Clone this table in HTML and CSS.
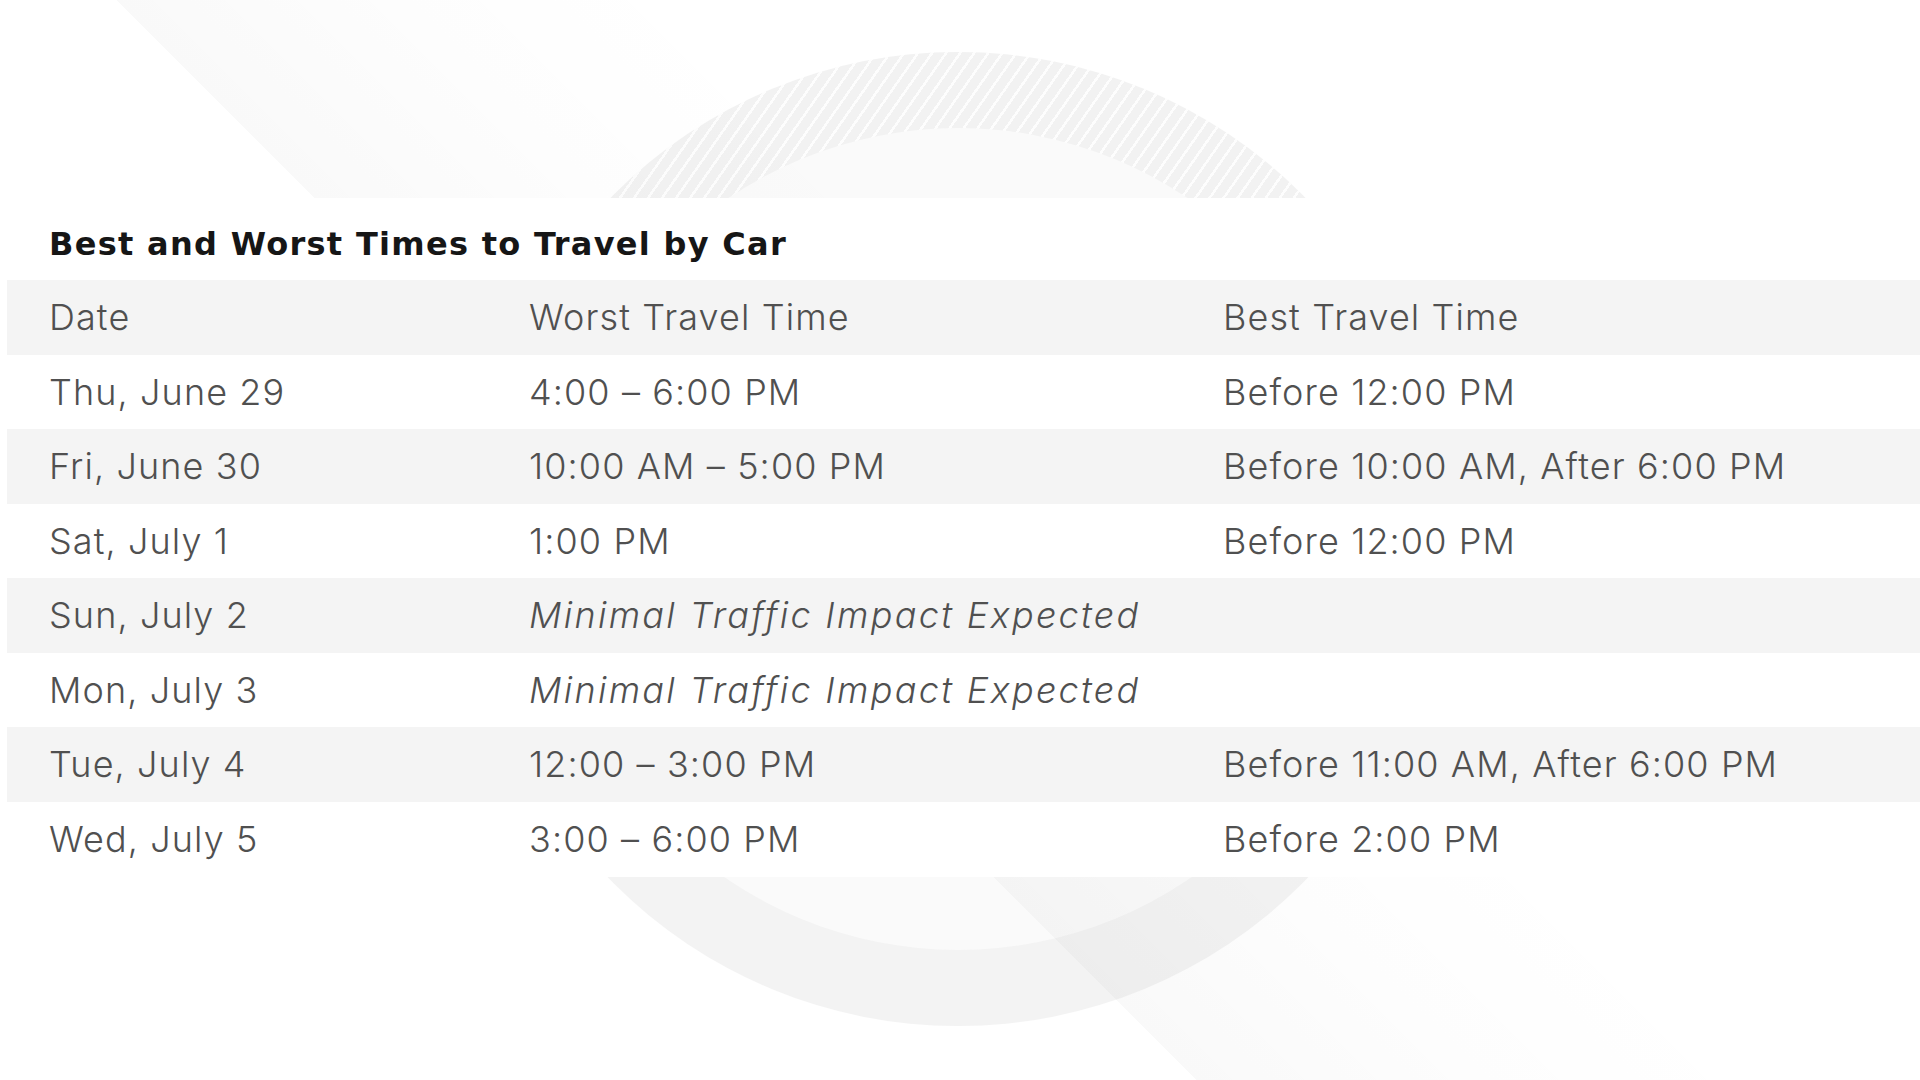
FILE: index.html
```html
<!DOCTYPE html>
<html lang="en">
<head>
<meta charset="utf-8">
<title>Best and Worst Times to Travel by Car</title>
<link rel="stylesheet" href="styles.css">
</head>
<body>
<div class="page">
  <div class="backdrop">
    <div class="ring"></div>
    <div class="disc"></div>
    <div class="band"></div>
  </div>
  <section class="panel">
    <h2 class="title">Best and Worst Times to Travel by Car</h2>
    <div class="table">
      <div class="row shade"><span>Date</span><span>Worst Travel Time</span><span>Best Travel Time</span></div>
      <div class="row"><span>Thu, June 29</span><span>4:00 – 6:00 PM</span><span>Before 12:00 PM</span></div>
      <div class="row shade"><span>Fri, June 30</span><span>10:00 AM – 5:00 PM</span><span>Before 10:00 AM, After 6:00 PM</span></div>
      <div class="row"><span>Sat, July 1</span><span>1:00 PM</span><span>Before 12:00 PM</span></div>
      <div class="row shade"><span>Sun, July 2</span><span class="note">Minimal Traffic Impact Expected</span><span></span></div>
      <div class="row"><span>Mon, July 3</span><span class="note">Minimal Traffic Impact Expected</span><span></span></div>
      <div class="row shade"><span>Tue, July 4</span><span>12:00 – 3:00 PM</span><span>Before 11:00 AM, After 6:00 PM</span></div>
      <div class="row"><span>Wed, July 5</span><span>3:00 – 6:00 PM</span><span>Before 2:00 PM</span></div>
    </div>
  </section>
</div>
</body>
</html>
```
FILE: styles.css
```css
html, body {
  margin: 0;
  padding: 0;
  background: #ffffff;
}

.page {
  position: relative;
  width: 1920px;
  height: 1080px;
  overflow: hidden;
  background: #ffffff;
}

/* decorative background layer */
.backdrop {
  position: absolute;
  inset: 0;
  z-index: 0;
}

.ring {
  position: absolute;
  left: 471px;
  top: 52px;
  width: 974px;
  height: 974px;
  border-radius: 50%;
  background:
    linear-gradient(to bottom, rgba(243,243,243,0) 50%, #f3f3f3 50%),
    repeating-linear-gradient(125deg, #f2f2f2 0 9px, #fdfdfd 9px 11.5px);
}

.disc {
  position: absolute;
  left: 547px;
  top: 128px;
  width: 822px;
  height: 822px;
  border-radius: 50%;
  background: #fafafa;
}

.band {
  position: absolute;
  inset: 0;
  background: linear-gradient(45deg,
    rgba(0,0,0,0) 846px,
    rgba(0,0,0,0.022) 846px,
    rgba(0,0,0,0.009) 1050px,
    rgba(0,0,0,0) 1260px);
}

/* content panel */
.panel {
  position: relative;
  z-index: 1;
  margin-top: 198px;
  height: 679px;
  background: #ffffff;
}

.title {
  margin: 0;
  padding: 26px 0 16px 49px;
  font-family: "DejaVu Sans", "Noto Sans", sans-serif;
  font-weight: 700;
  font-size: 32px;
  line-height: 40px;
  letter-spacing: 1.3px;
  color: #161616;
}

.table {
  margin-left: 7px;
}

.row {
  display: grid;
  grid-template-columns: 480px 694px 1fr;
  align-items: center;
  height: 74.5px;
  padding-left: 42px;
  font-family: "Inter", "Open Sans", "Noto Sans", sans-serif;
  font-weight: 300;
  font-size: 36px;
  line-height: 40px;
  letter-spacing: 1.1px;
  color: #505050;
  white-space: nowrap;
}

.row.shade {
  background: #f4f4f4;
}

.note {
  font-style: italic;
  letter-spacing: 2.3px;
}
```
